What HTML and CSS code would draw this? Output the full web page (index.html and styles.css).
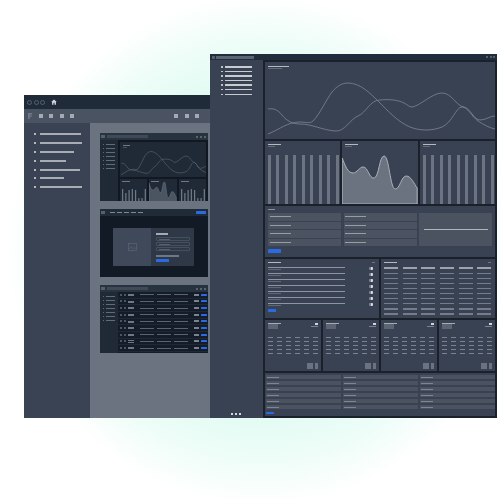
FILE: index.html
```html
<!DOCTYPE html>
<html lang="en">
<head>
<meta charset="utf-8">
<title>Dashboard templates</title>
<link rel="stylesheet" href="styles.css">
</head>
<body>
<svg class="defs" aria-hidden="true">
  <defs>
    <g id="curves" fill="none">
      <path d="M268 109 C274 108 278 110 282 115 C287 121 292 124 300 124 C312 124 322 130 335 131 C345 132 350 119 358 116 C366 113 370 100 380 100 C390 99 398 100 404 103 C408 105 409 107 412 107 C420 106 432 93 442 93 C452 93 456 106 464 107 C470 108 474 120 480 120 C486 120 490 116 495 116"/>
      <path d="M268 134 C280 129 288 122 300 122 C306 122 310 124 313 121 C320 114 326 100 332 92 C337 86 342 83 348 83 C360 83 370 93 378 101 C388 111 398 122 410 127 C420 131 432 131 442 127 C452 123 456 107 462 107 C468 107 472 117 478 121 C484 125 490 128 495 129"/>
    </g>
    <path id="area" d="M343 158 C346 165 348 173 354 173 C358 173 360 167 364 167 C369 167 370 179 375 178 C380 177 380 156 385 156 C390 156 391 189 396 189 C401 189 402 176 407 176 C412 176 415 184 418 188 L418 204 L343 204 Z"/>
    <g id="minibars">
      <rect x="2" y="8" width="1.2" height="20"/><rect x="5.2" y="12" width="1.2" height="20"/><rect x="8.4" y="9" width="1.2" height="20"/><rect x="11.6" y="8" width="1.2" height="20"/><rect x="14.8" y="9" width="1.2" height="20"/><rect x="18" y="17" width="1.2" height="20"/><rect x="21.2" y="17" width="1.2" height="20"/><rect x="24.4" y="8" width="1.2" height="20"/>
    </g>
  </defs>
</svg>

<div class="stage">
  <section class="window back">
    <header class="back-title">
      <span class="ring"></span><span class="ring"></span><span class="ring"></span>
      <svg class="home" viewBox="0 0 10 10"><path d="M5 .8 L9.6 5 H8.2 V9.4 H5.9 V6.4 H4.1 V9.4 H1.8 V5 H.4 Z"/></svg>
    </header>
    <div class="back-tools">
      <svg class="logo" viewBox="0 0 6 7"><path d="M0 0 H5 V2 H2 V3 H4.4 V4.6 H2 V7 H0 Z"/></svg>
      <div class="tool-group"><i></i><i></i><i></i><i></i></div>
      <div class="tool-group right"><i></i><i></i><i></i></div>
    </div>
    <div class="back-body">
      <nav class="back-nav">
        <div class="nav-row"><i></i><b class="w41"></b></div>
        <div class="nav-row"><i></i><b class="w42"></b></div>
        <div class="nav-row"><i></i><b class="w34"></b></div>
        <div class="nav-row"><i></i><b class="w26"></b></div>
        <div class="nav-row"><i></i><b class="w40"></b></div>
        <div class="nav-row"><i></i><b class="w24"></b></div>
        <div class="nav-row"><i></i><b class="w42"></b></div>
      </nav>
      <main class="back-main">
        <article class="thumb">
          <header class="thumb-bar"><i class="t-sq"></i><i class="t-search"></i><span class="t-dots"><i></i><i></i><i></i></span></header>
          <div class="thumb-split">
            <div class="t-side">
              <div class="t-item"></div><div class="t-item"></div><div class="t-item"></div><div class="t-item"></div><div class="t-item"></div><div class="t-item"></div><div class="t-item"></div>
            </div>
            <div class="t-dash">
              <div class="t-chart">
                <i class="t-h1"></i><i class="t-h2"></i>
                <svg class="fill-svg" viewBox="265 62 230 77" preserveAspectRatio="none"><use href="#curves" class="thumb-lines"/></svg>
              </div>
              <div class="t-mini"><i class="t-m1"></i><svg viewBox="0 0 27 22"><use href="#minibars" class="mini-bars"/></svg></div>
              <div class="t-mini"><i class="t-m1"></i><svg viewBox="343 150 75 54" preserveAspectRatio="none"><use href="#area" class="mini-area"/></svg></div>
              <div class="t-mini"><i class="t-m1"></i><svg viewBox="0 0 27 22"><use href="#minibars" class="mini-bars"/></svg></div>
            </div>
          </div>
        </article>

        <article class="thumb dark">
          <header class="form-bar">
            <i class="t-sq"></i>
            <span class="form-nav"><i></i><i></i><i></i><i></i><i></i></span>
            <i class="blue form-cta"></i>
          </header>
          <div class="form-wrap">
            <div class="form-card">
              <div class="form-img">
                <svg viewBox="0 0 10 9"><rect x=".5" y=".5" width="9" height="8" fill="none"/><path d="M1 7 L3.5 4.5 L5.5 6.5 L7 5 L9 7" fill="none"/></svg>
              </div>
              <div class="form-fields">
                <i class="ff-title"></i>
                <div class="ff-input"><i></i></div>
                <div class="ff-input"><i></i></div>
                <div class="ff-input"><i></i></div>
                <i class="ff-line"></i>
                <i class="blue ff-btn"></i>
              </div>
            </div>
          </div>
        </article>

        <article class="thumb">
          <header class="thumb-bar"><i class="t-sq"></i><i class="t-search"></i><span class="t-dots"><i></i><i></i><i></i></span></header>
          <div class="thumb-split">
            <div class="t-side">
              <div class="t-item"></div><div class="t-item"></div><div class="t-item"></div><div class="t-item"></div><div class="t-item"></div><div class="t-item"></div><div class="t-item"></div>
            </div>
            <div class="t-list">
              <div class="t-row"><i class="c-sq"></i><i class="c-sq"></i><span class="c-name"><i></i><i></i></span><i class="c-b"></i><i class="c-b"></i><i class="c-b"></i><i class="c-g"></i><i class="blue c-u"></i></div>
              <div class="t-row"><i class="c-sq"></i><i class="c-sq"></i><span class="c-name"><i></i><i></i></span><i class="c-b"></i><i class="c-b"></i><i class="c-b"></i><i class="c-g"></i><i class="blue c-u"></i></div>
              <div class="t-row"><i class="c-sq"></i><i class="c-sq"></i><span class="c-name"><i></i><i></i></span><i class="c-b"></i><i class="c-b"></i><i class="c-b"></i><i class="c-g"></i><i class="blue c-u"></i></div>
              <div class="t-row"><i class="c-sq"></i><i class="c-sq"></i><span class="c-name"><i></i><i></i></span><i class="c-b"></i><i class="c-b"></i><i class="c-b"></i><i class="c-g"></i><i class="blue c-u"></i></div>
              <div class="t-row"><i class="c-sq"></i><i class="c-sq"></i><span class="c-name"><i></i><i></i></span><i class="c-b"></i><i class="c-b"></i><i class="c-b"></i><i class="c-g"></i><i class="blue c-u"></i></div>
              <div class="t-row"><i class="c-sq"></i><i class="c-sq"></i><span class="c-name"><i></i><i></i></span><i class="c-b"></i><i class="c-b"></i><i class="c-b"></i><i class="c-g"></i><i class="blue c-u"></i></div>
              <div class="t-row"><i class="c-sq"></i><i class="c-sq"></i><span class="c-name"><i></i><i></i></span><i class="c-b"></i><i class="c-b"></i><i class="c-b"></i><i class="c-g"></i><i class="blue c-u"></i></div>
              <div class="t-row"><i class="c-sq"></i><i class="c-sq"></i><span class="c-name"><i></i><i></i></span><i class="c-b"></i><i class="c-b"></i><i class="c-b"></i><i class="c-g"></i><i class="blue c-u"></i></div>
              <div class="t-row"><i class="c-sq"></i><i class="c-sq"></i><span class="c-name"><i></i><i></i></span><i class="c-b"></i><i class="c-b"></i><i class="c-b"></i><i class="c-g"></i><i class="blue c-u"></i></div>
            </div>
          </div>
        </article>
      </main>
    </div>
  </section>

  <section class="window front">
    <header class="front-title">
      <i class="f-sq"></i><i class="f-search"></i>
      <span class="f-dots"><i></i><i></i><i></i></span>
    </header>
    <div class="front-body">
      <nav class="front-nav">
        <div class="fn-list">
          <div class="fn-row"><i></i><b></b></div>
          <div class="fn-row"><i></i><b></b></div>
          <div class="fn-row"><i></i><b></b></div>
          <div class="fn-row"><i></i><b></b></div>
          <div class="fn-row"><i></i><b></b></div>
          <div class="fn-row"><i></i><b></b></div>
          <div class="fn-row"><i></i><b></b></div>
        </div>
        <div class="fn-more"><i></i><i></i><i></i></div>
      </nav>
      <main class="dash">
        <div class="panel span-12 chart-panel">
          <i class="title"></i><i class="sub"></i>
          <svg class="fill-svg" viewBox="265 62 230 77"><use href="#curves" class="main-lines"/></svg>
        </div>

        <div class="panel span-4 bar-panel"><i class="title"></i><i class="sub"></i><div class="bars"></div></div>
        <div class="panel span-4 bar-panel">
          <i class="title"></i><i class="sub"></i>
          <svg class="fill-svg" viewBox="343 141 75 63"><use href="#area" class="main-area"/></svg>
        </div>
        <div class="panel span-4 bar-panel"><i class="title"></i><i class="sub"></i><div class="bars"></div></div>

        <div class="panel span-12 form-panel">
          <i class="fp-title"></i>
          <div class="fp-grid">
            <div class="fp-col"><div class="fp-field"><i></i></div><div class="fp-field"><i></i></div><div class="fp-field"><i></i></div><div class="fp-field"><i></i></div></div>
            <div class="fp-col"><div class="fp-field"><i></i></div><div class="fp-field"><i></i></div><div class="fp-field"><i></i></div><div class="fp-field"><i></i></div></div>
            <div class="fp-area"><i></i></div>
          </div>
          <i class="blue fp-btn"></i>
        </div>

        <div class="panel span-6 list-panel">
          <div class="lp-head"><i></i><i></i></div>
          <div class="lp-row"><span><i></i><i></i></span><b></b></div>
          <div class="lp-row"><span><i></i><i></i></span><b></b></div>
          <div class="lp-row"><span><i></i><i></i></span><b></b></div>
          <div class="lp-row"><span><i></i><i></i></span><b></b></div>
          <div class="lp-row"><span><i></i><i></i></span><b></b></div>
          <div class="lp-row"><span><i></i><i></i></span><b></b></div>
          <div class="lp-row"><span><i></i><i></i></span><b></b></div>
          <i class="blue lp-btn"></i>
        </div>
        <div class="panel span-6 table-panel">
          <div class="lp-head"><i></i><i></i></div>
          <div class="tp-head"><i></i><i></i><i></i><i></i><i></i><i></i></div>
          <div class="tp-grid">
            <i></i><i></i><i></i><i></i><i></i><i></i><i></i><i></i><i></i><i></i><i></i><i></i>
            <i></i><i></i><i></i><i></i><i></i><i></i><i></i><i></i><i></i><i></i><i></i><i></i>
            <i></i><i></i><i></i><i></i><i></i><i></i><i></i><i></i><i></i><i></i><i></i><i></i>
            <i></i><i></i><i></i><i></i><i></i><i></i><i></i><i></i><i></i><i></i><i></i><i></i>
            <i></i><i></i><i></i><i></i><i></i><i></i>
          </div>
        </div>

        <div class="panel span-3 stat-panel">
          <div class="sp-head"><span class="sp-t"><i></i><i></i></span><span class="sp-k"><i></i><i></i></span></div>
          <div class="sp-grid"><i></i><i></i><i></i><i></i><i></i><i></i><i></i><i></i><i></i><i></i><i></i><i></i><i></i><i></i><i></i><i></i><i></i><i></i><i></i><i></i><i></i><i></i><i></i><i></i><i></i><i></i><i></i><i></i><i></i><i></i></div>
          <div class="sp-foot"><i></i><i></i></div>
        </div>
        <div class="panel span-3 stat-panel">
          <div class="sp-head"><span class="sp-t"><i></i><i></i></span><span class="sp-k"><i></i><i></i></span></div>
          <div class="sp-grid"><i></i><i></i><i></i><i></i><i></i><i></i><i></i><i></i><i></i><i></i><i></i><i></i><i></i><i></i><i></i><i></i><i></i><i></i><i></i><i></i><i></i><i></i><i></i><i></i><i></i><i></i><i></i><i></i><i></i><i></i></div>
          <div class="sp-foot"><i></i><i></i></div>
        </div>
        <div class="panel span-3 stat-panel">
          <div class="sp-head"><span class="sp-t"><i></i><i></i></span><span class="sp-k"><i></i><i></i></span></div>
          <div class="sp-grid"><i></i><i></i><i></i><i></i><i></i><i></i><i></i><i></i><i></i><i></i><i></i><i></i><i></i><i></i><i></i><i></i><i></i><i></i><i></i><i></i><i></i><i></i><i></i><i></i><i></i><i></i><i></i><i></i><i></i><i></i></div>
          <div class="sp-foot"><i></i><i></i></div>
        </div>
        <div class="panel span-3 stat-panel">
          <div class="sp-head"><span class="sp-t"><i></i><i></i></span><span class="sp-k"><i></i><i></i></span></div>
          <div class="sp-grid"><i></i><i></i><i></i><i></i><i></i><i></i><i></i><i></i><i></i><i></i><i></i><i></i><i></i><i></i><i></i><i></i><i></i><i></i><i></i><i></i><i></i><i></i><i></i><i></i><i></i><i></i><i></i><i></i><i></i><i></i></div>
          <div class="sp-foot"><i></i><i></i></div>
        </div>

        <div class="panel span-12 fields-panel">
          <div class="fd-grid">
            <div class="fd"><i></i></div><div class="fd"><i></i></div><div class="fd"><i></i></div>
            <div class="fd"><i></i></div><div class="fd"><i></i></div><div class="fd"><i></i></div>
            <div class="fd"><i></i></div><div class="fd"><i></i></div><div class="fd"><i></i></div>
            <div class="fd"><i></i></div><div class="fd"><i></i></div><div class="fd"><i></i></div>
            <div class="fd"><i></i></div><div class="fd"><i></i></div><div class="fd"><i></i></div>
            <div class="fd"><i></i></div><div class="fd"><i></i></div><div class="fd"><i></i></div>
          </div>
          <i class="blue fd-btn"></i>
        </div>
      </main>
    </div>
  </section>
</div>
</body>
</html>
```
FILE: styles.css
```css
* { box-sizing: border-box; }
html, body { margin: 0; padding: 0; background: #fff; }
body { width: 500px; height: 498px; overflow: hidden; font-family: "Liberation Sans", sans-serif; }
i, b { display: block; }
.defs { position: absolute; width: 0; height: 0; }
.blue { background: #2a6ae2; border-radius: .5px; }

.stage {
  position: relative;
  width: 500px;
  height: 498px;
  overflow: hidden;
  background: radial-gradient(circle 255px at 262px 250px, #d8fbee 0%, #dffbf2 60%, #eefdf8 82%, #ffffff 100%);
}
.window { position: absolute; overflow: hidden; filter: blur(.3px); }

/* Back window */
.back { left: 24px; top: 95px; width: 188px; height: 323px; display: flex; flex-direction: column; background: #3a4353; }
.back-title { height: 14px; background: #1f2b38; display: flex; align-items: center; gap: 1.5px; padding-left: 3px; flex: none; }
.ring { width: 5px; height: 5px; border: 1px solid #566070; border-radius: 50%; }
.home { width: 6px; height: 6px; margin-left: 4px; fill: #d5d9de; }
.back-tools { height: 14px; flex: none; background: #4a5361; display: flex; align-items: center; padding: 0 13px 0 4px; }
.logo { width: 5px; height: 6px; fill: #6f7885; }
.tool-group { display: flex; gap: 6.4px; margin-left: 6px; }
.tool-group i { width: 4px; height: 4px; background: #a5aab2; }
.tool-group.right { margin-left: auto; }
.back-body { flex: 1; display: flex; min-height: 0; }
.back-nav { width: 66px; flex: none; background: #3a4353; padding: 10px 0 0 10px; display: flex; flex-direction: column; gap: 6.9px; }
.nav-row { display: flex; align-items: center; gap: 4px; height: 2px; }
.nav-row i { width: 2px; height: 2px; background: #b5b9bf; }
.nav-row b { height: 2px; background: #a9aeb5; }
.w41 { width: 41px; } .w42 { width: 42px; } .w34 { width: 34px; } .w26 { width: 26px; } .w40 { width: 40px; } .w24 { width: 24px; }
.back-main { flex: 1; background: #6b7380; padding: 10px 0 0 10px; display: flex; flex-direction: column; gap: 8px; }

/* Thumbnails */
.thumb { width: 108px; height: 68px; flex: none; background: #1f2a36; overflow: hidden; display: flex; flex-direction: column; }
.thumb.dark { background: #121a26; }
.thumb-bar { height: 7px; flex: none; background: #283340; display: flex; align-items: center; padding: 0 2px 0 1px; gap: 2px; }
.t-sq { width: 4px; height: 3px; background: #55606d; }
.t-search { width: 41px; height: 3px; background: #3f4957; }
.t-dots { margin-left: auto; display: flex; gap: 2px; }
.t-dots i { width: 2px; height: 2px; background: #5a6471; }
.thumb-split { flex: 1; display: flex; min-height: 0; }
.t-side { width: 18px; flex: none; background: #1f2a36; padding-top: 3.5px; display: flex; flex-direction: column; gap: 3.1px; }
.t-item { width: 12px; height: 1px; margin-left: 3px; background: linear-gradient(90deg, #626c79 1px, transparent 1px 3px, #626c79 3px); }
.t-dash { flex: 1; background: #111822; padding: 2px; display: grid; grid-template-columns: repeat(3, 1fr); grid-template-rows: 35px 26px; gap: 2px; align-items: start; }
.t-chart { grid-column: 1 / -1; height: 35px; background: #1f2a36; position: relative; padding: 3px; }
.t-h1 { width: 7px; height: 1px; background: #6e7884; }
.t-h2 { width: 4px; height: 1px; margin-top: 1px; background: #475160; }
.fill-svg { position: absolute; inset: 0; width: 100%; height: 100%; }
.thumb-lines { stroke: #5b6673; stroke-width: 1.5; vector-effect: non-scaling-stroke; }
.t-mini { height: 26px; background: #1f2a36; padding: 2px 2px 0; position: relative; overflow: hidden; }
.t-mini svg { position: absolute; left: 0; right: 0; top: 0; width: 100%; height: 100%; }
.t-m1 { width: 8px; height: 1px; background: #6e7884; }
.mini-bars { fill: #707a86; }
.mini-area { fill: #4b5562; stroke: #8a929c; stroke-width: .8; }

.form-bar { height: 7px; flex: none; background: #202b38; display: flex; align-items: center; padding: 0 2px 0 1px; }
.form-nav { display: flex; gap: 2px; margin-left: 5px; }
.form-nav i { width: 5px; height: 1.5px; background: #808894; }
.form-cta { margin-left: auto; width: 10px; height: 2.5px; }
.form-wrap { flex: 1; padding: 12px 14px 11px 13px; }
.form-card { height: 38px; background: #2e3847; display: flex; }
.form-img { width: 38px; background: #3f4959; display: flex; align-items: center; justify-content: center; }
.form-img svg { width: 9px; height: 8px; stroke: #5f6977; stroke-width: .7; }
.form-fields { flex: 1; padding: 5px 4px 0 5px; display: flex; flex-direction: column; gap: 1px; }
.ff-title { width: 12px; height: 1.5px; background: #a5abb3; margin-bottom: 1.5px; }
.ff-input { height: 4px; border: .5px solid #465160; border-radius: 1px; padding: 1px 0 0 2px; }
.ff-input i { width: 11px; height: 1px; background: #55606d; }
.ff-line { width: 23px; height: 1.5px; background: #6e7884; margin-top: 3px; }
.ff-btn { width: 13px; height: 2.5px; margin-top: 1.5px; }

.t-list { flex: 1; background: #131c28; display: flex; flex-direction: column; padding-top: 0; }
.t-row { height: 6.67px; display: flex; align-items: center; padding-left: 2px; border-bottom: .5px solid #1e2935; flex: none; }
.c-sq { width: 2px; height: 2px; background: #4c5663; margin-right: 2px; }
.c-name { width: 12px; margin-right: 0; display: flex; flex-direction: column; gap: .5px; }
.c-name i { height: .7px; width: 6px; background: #6e7884; }
.c-b { width: 14px; height: 1px; background: #5a6471; margin-right: 3px; }
.c-g { width: 5px; height: 2px; background: #7b838e; margin: 0 2px 0 3px; }
.c-u { width: 6px; height: 2px; }

/* Front window */
.front { left: 210px; top: 54px; width: 287px; height: 364px; display: flex; flex-direction: column; background: #1a212b; }
.front-title { height: 6px; flex: none; background: #212d3b; display: flex; align-items: center; padding: 0 2px; }
.f-sq { width: 3px; height: 3px; background: #566170; }
.f-search { width: 38px; height: 3px; background: #5a6472; margin-left: 1px; }
.f-dots { margin-left: auto; display: flex; gap: 1.5px; }
.f-dots i { width: 2px; height: 2px; background: #55606d; }
.front-body { flex: 1; display: flex; min-height: 0; }
.front-nav { width: 53px; flex: none; background: #394252; display: flex; flex-direction: column; justify-content: space-between; padding: 6px 0 3px 11px; }
.fn-list { display: flex; flex-direction: column; gap: 3.1px; }
.fn-row { display: flex; align-items: center; gap: 2px; height: 1.5px; }
.fn-row i { width: 2px; height: 1.5px; background: #c0c4c9; }
.fn-row b { width: 27px; height: 1.5px; background: #c8ccd1; }
.fn-more { display: flex; gap: 2.2px; margin-left: 10px; }
.fn-more i { width: 2px; height: 2px; background: #d5d8dc; }

.dash { flex: 1; padding: 2px; display: grid; grid-template-columns: repeat(12, 1fr); grid-template-rows: 77px 63px 51px 59px 51px 43px; gap: 2px; background: #1a212b; }
.panel { background: #394252; position: relative; min-width: 0; overflow: hidden; }
.span-12 { grid-column: span 12; } .span-6 { grid-column: span 6; } .span-4 { grid-column: span 4; } .span-3 { grid-column: span 3; }
.title { width: 21px; height: 1.2px; background: #b6bac0; }
.sub { width: 14px; height: 1px; margin-top: .8px; background: #636c79; }
.chart-panel { padding: 4px 3px; }
.main-lines { stroke: #7d8592; stroke-width: .8; }
.bar-panel { padding: 3px; display: flex; flex-direction: column; }
.bar-panel .title { width: 13px; }
.bar-panel .sub { width: 7px; }
.bars { position: absolute; left: 3px; right: 0; top: 14px; bottom: 0; background: repeating-linear-gradient(90deg, #6c7481 0 3px, transparent 3px 8.45px); }
.main-area { fill: #6b7380; stroke: #aeb3ba; stroke-width: 1; }

.form-panel { padding: 3px 3px 0; display: flex; flex-direction: column; }
.fp-title { width: 7px; height: 1px; background: #8a919b; }
.fp-grid { display: grid; grid-template-columns: 73px 73px 73px; gap: 2.5px; margin-top: 3px; height: 33px; }
.fp-col { display: flex; flex-direction: column; gap: 1px; }
.fp-field { flex: 1; background: #4b5361; display: flex; align-items: center; padding-left: 1.5px; }
.fp-field i { width: 21px; height: 1.2px; background: #979da6; }
.fp-area { background: #4b5361; display: flex; align-items: center; justify-content: center; }
.fp-area i { width: 64px; height: 1.2px; background: #b0b4bb; }
.fp-btn { width: 13px; height: 4px; margin-top: 3px; }

.list-panel { padding: 3px; display: flex; flex-direction: column; }
.lp-head { display: flex; justify-content: space-between; height: 4px; padding-right: 1px; }
.lp-head i:first-child { width: 13px; height: 1.2px; background: #b6bac0; }
.lp-head i:last-child { width: 3px; height: 1px; background: #6e7784; }
.lp-row { display: flex; justify-content: space-between; height: 6px; padding-top: 1px; padding-right: 3px; flex: none; }
.lp-row span { width: 77px; display: flex; flex-direction: column; gap: .4px; }
.lp-row span i:first-child { height: 1.3px; background: #8f95a0; }
.lp-row span i:last-child { width: 13px; height: 1.3px; background: #5f6875; }
.lp-row b { width: 4px; height: 3px; background: linear-gradient(90deg, #7b8290 50%, #d8dbdf 50%); border-radius: 1px; }
.lp-btn { width: 8px; height: 2.5px; margin-top: 1px; }

.table-panel { padding: 3px 3px 0; display: flex; flex-direction: column; }
.tp-head, .tp-grid { display: grid; grid-template-columns: repeat(6, 14px); column-gap: 4.7px; }
.tp-head { margin-top: 1px; }
.tp-head i { height: 1.6px; background: #9ea4ad; }
.tp-grid { margin-top: 4px; row-gap: 3.8px; }
.tp-grid i { height: 1.3px; background: #767d8a; }

.stat-panel { padding: 3px; }
.sp-head { display: flex; justify-content: space-between; height: 14px; }
.sp-t { display: block; }
.sp-t i:first-child { width: 13px; height: 1px; background: #a7acb4; }
.sp-t i:last-child { width: 10px; height: 5px; background: #5c6572; }
.sp-k { display: flex; flex-direction: column; align-items: flex-end; gap: 1px; }
.sp-k i:first-child { width: 3px; height: 2px; background: #d1d4d8; }
.sp-k i:last-child { width: 7px; height: 1px; background: #7c8390; }
.sp-grid { display: grid; grid-template-columns: repeat(6, 5px); column-gap: 4px; row-gap: 3px; margin-top: 0; }
.sp-grid i { height: 1px; background: #7b8290; }
.sp-foot { position: absolute; right: 3px; bottom: 2px; display: flex; gap: 2px; }
.sp-foot i { height: 6px; background: #6b7380; }
.sp-foot i:first-child { width: 6px; }
.sp-foot i:last-child { width: 3px; }

.fields-panel { padding: 2px 2px 0 1px; display: flex; flex-direction: column; }
.fd-grid { display: grid; grid-template-columns: repeat(3, 75px); column-gap: 2px; row-gap: 2px; }
.fd { height: 4px; background: #4b5361; display: flex; align-items: center; padding-left: 1px; }
.fd i { width: 12px; height: 1px; background: #7f8692; }
.fd-btn { width: 8px; height: 2px; margin-top: 3px; }
```
